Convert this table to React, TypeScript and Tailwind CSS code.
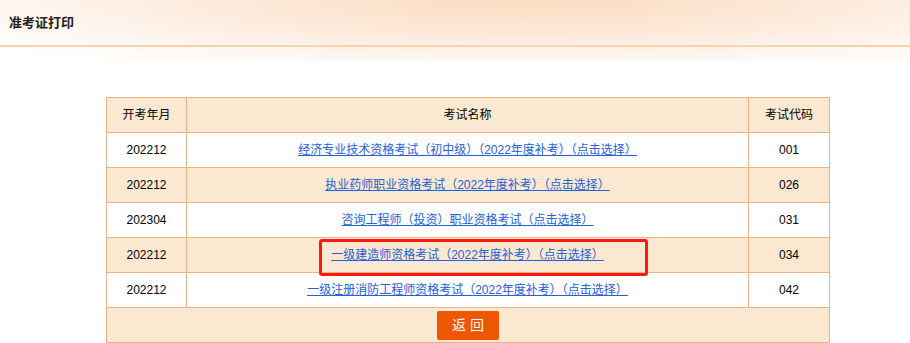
const rows = [
  { month: "202212", name: "经济专业技术资格考试（初中级）（2022年度补考）（点击选择）", code: "001" },
  { month: "202212", name: "执业药师职业资格考试（2022年度补考）（点击选择）", code: "026" },
  { month: "202304", name: "咨询工程师（投资）职业资格考试（点击选择）", code: "031" },
  { month: "202212", name: "一级建造师资格考试（2022年度补考）（点击选择）", code: "034" },
  { month: "202212", name: "一级注册消防工程师资格考试（2022年度补考）（点击选择）", code: "042" },
];

export default function App() {
  return (
    <div
      className="w-[910px] h-[343px] bg-white overflow-hidden text-[12px] text-black"
      style={{ fontFamily: '"Liberation Sans", "Noto Sans CJK SC", sans-serif' }}
    >
      <div className="h-[60px] bg-[radial-gradient(ellipse_75%_130%_at_58%_0%,#fadbbf_0%,#fdeadb_45%,#ffffff_100%)]">
        <div className="h-[47px] border-b-2 border-[#f3d3b2] flex items-center pl-[9px]">
          <h1 className="text-[13px] font-bold text-[#222] pt-[1px]">准考证打印</h1>
        </div>
      </div>

      <div className="relative ml-[106px] mt-[37px] w-[724px]">
        <table className="w-full border-collapse text-center">
          <thead>
            <tr className="h-[35px] bg-[#fae9d0]">
              <th className="w-[80px] border border-[#e9b48a] font-normal">开考年月</th>
              <th className="border border-[#e9b48a] font-normal">考试名称</th>
              <th className="w-[81px] border border-[#e9b48a] font-normal">考试代码</th>
            </tr>
          </thead>
          <tbody>
            {rows.map((r, i) => (
              <tr key={r.code} className={`h-[35px] ${i % 2 === 1 ? "bg-[#fae9d0]" : "bg-white"}`}>
                <td className="border border-[#e9b48a]">{r.month}</td>
                <td className="border border-[#e9b48a]">
                  <a href="#" className="text-[#2660d8] underline">
                    {r.name}
                  </a>
                </td>
                <td className="border border-[#e9b48a]">{r.code}</td>
              </tr>
            ))}
            <tr className="h-[35px] bg-[#fae9d0]">
              <td colSpan={3} className="border border-[#e9b48a]">
                <button className="w-[62px] h-[29px] rounded-[2px] bg-[#ee5600] text-white text-[14px] tracking-[4px] pl-[4px]">
                  返回
                </button>
              </td>
            </tr>
          </tbody>
        </table>
        <div className="absolute left-[213px] top-[142px] w-[329px] h-[37px] border-[3px] border-[#fb1a10] rounded-[3px] pointer-events-none" />
      </div>
    </div>
  );
}
